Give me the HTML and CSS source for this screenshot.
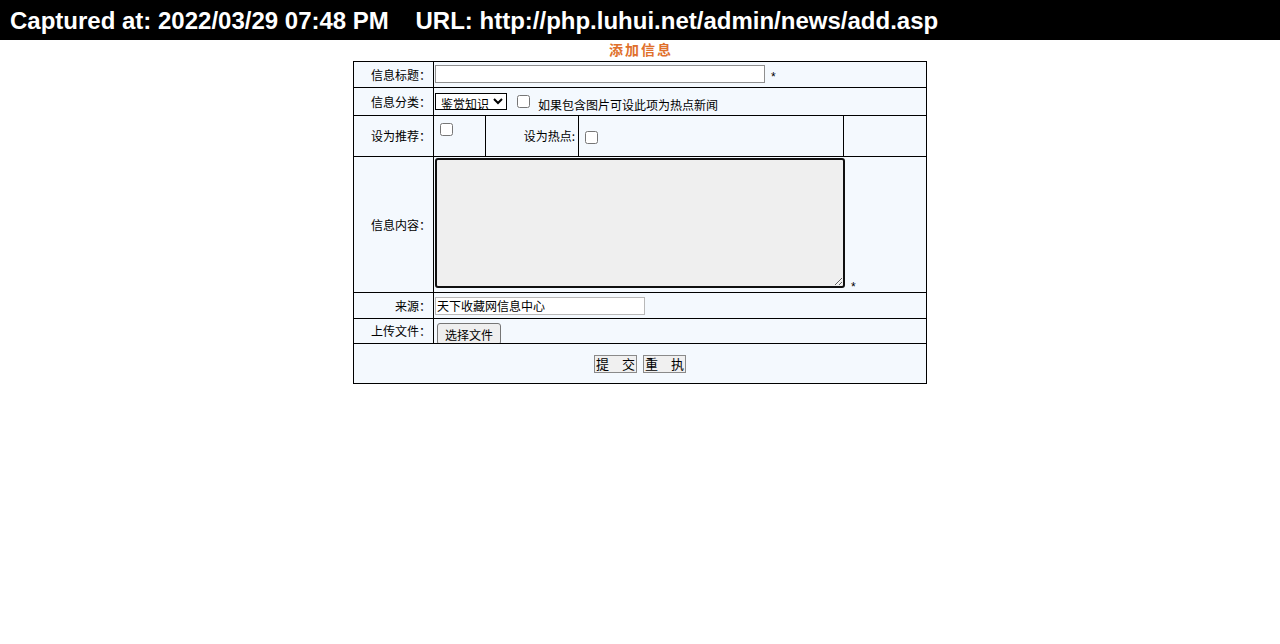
FILE: index.html
```html
<!DOCTYPE html>
<html lang="zh-CN">
<head>
<meta charset="utf-8">
<title>添加信息</title>
<link rel="stylesheet" href="styles.css">
</head>
<body>
<div class="capbar">Captured at: 2022/03/29 07:48 PM    URL: http://php.luhui.net/admin/news/add.asp</div>
<div class="title">添加信息</div>
<table class="form">
  <colgroup>
    <col class="c1"><col class="c2"><col class="c3"><col class="c4"><col class="c5">
  </colgroup>
  <tr class="r1">
    <td class="lbl">信息标题：</td>
    <td colspan="4" class="val"><input type="text" class="t-title"><span class="star">*</span></td>
  </tr>
  <tr class="r2">
    <td class="lbl">信息分类：</td>
    <td colspan="4" class="val"><select class="sel"><option>鉴赏知识</option></select><input type="checkbox" class="chk chk-hot"><span class="hint">如果包含图片可设此项为热点新闻</span></td>
  </tr>
  <tr class="r3">
    <td class="lbl">设为推荐：</td>
    <td class="val top"><input type="checkbox" class="chk chk-rec"></td>
    <td class="lbl2">设为热点:</td>
    <td class="val"><input type="checkbox" class="chk chk-hot2"></td>
    <td></td>
  </tr>
  <tr class="r4">
    <td class="lbl">信息内容：</td>
    <td colspan="4" class="val bottom"><textarea class="content"></textarea><span class="star star2">*</span></td>
  </tr>
  <tr class="r5">
    <td class="lbl">来源：</td>
    <td colspan="4" class="val"><input type="text" class="t-src" value="天下收藏网信息中心"></td>
  </tr>
  <tr class="r6">
    <td class="lbl">上传文件：</td>
    <td colspan="4" class="val clip"><div class="clipbox"><button class="filebtn">选择文件</button></div></td>
  </tr>
  <tr class="r7">
    <td colspan="5" class="center"><button class="btn">提　交</button><button class="btn">重　执</button></td>
  </tr>
</table>
</body>
</html>
```
FILE: styles.css
```css
html, body {
  margin: 0;
  padding: 0;
  background: #ffffff;
}
body {
  font-family: "Noto Sans CJK SC", "Liberation Sans", sans-serif;
  font-size: 12px;
  color: #000;
}
.capbar {
  height: 40px;
  line-height: 42px;
  background: #000;
  color: #fff;
  font-family: "Liberation Sans", Arial, sans-serif;
  font-weight: bold;
  font-size: 24px;
  padding-left: 10px;
  white-space: pre;
  overflow: hidden;
}
.title {
  height: 21px;
  line-height: 19px;
  text-align: center;
  color: #e0702c;
  font-weight: bold;
  font-size: 14px;
  letter-spacing: 2px;
  padding-left: 2px;
}
.form {
  width: 574px;
  margin: 0 auto;
  border-collapse: collapse;
  background: #f4f9fe;
  table-layout: fixed;
}
.form td {
  border: 1px solid #000;
  padding: 0;
  font-size: 12px;
  line-height: 14px;
}
.c1 { width: 80px; }
.c2 { width: 52px; }
.c3 { width: 93px; }
.c4 { width: 265px; }
.c5 { width: 83px; }
.r1 td { height: 25px; }
.r2 td { height: 27px; }
.r3 td { height: 40px; }
.r4 td { height: 135px; }
.r5 td { height: 25px; }
.r6 td { height: 24px; }
.r7 td { height: 39px; }
.lbl {
  text-align: right;
  padding-right: 2px !important;
  white-space: nowrap;
}
.lbl2 {
  text-align: right;
  padding-right: 3px !important;
  white-space: nowrap;
}
.val {
  padding-left: 1px !important;
  white-space: nowrap;
}
.top { vertical-align: top; }
.bottom { vertical-align: bottom; }
.center { text-align: center; }
.t-title {
  width: 326px;
  height: 14px;
  margin: 0;
  border: 1px solid #8f8f8f;
  padding: 1px 1px;
  vertical-align: middle;
  background: #fff;
}
.star {
  display: inline-block;
  margin-left: 6px;
  vertical-align: -4px;
  font-family: "Liberation Sans", sans-serif;
  font-size: 12px;
}
.star2 {
  margin-left: 6px;
  vertical-align: 0;
  position: relative;
  top: 2px;
}
.sel {
  width: 72px;
  height: 17px;
  margin: 0;
  padding: 0 0 0 1px;
  border: 1px solid #000;
  border-radius: 0;
  font-size: 12px;
  font-family: "Noto Sans CJK SC", sans-serif;
  line-height: 15px;
  vertical-align: -5px;
  background: #fff;
  text-decoration: underline;
}
.chk {
  width: 13px;
  height: 13px;
  margin: 0;
}
.chk-hot {
  margin-left: 10px;
  vertical-align: -2px;
  position: relative;
  top: 2px;
}
.hint {
  margin-left: 8px;
  vertical-align: -6px;
}
.chk-rec {
  margin: 7px 0 0 5px;
}
.chk-hot2 {
  margin-left: 5px;
  vertical-align: middle;
}
.content {
  display: inline-block;
  width: 406px;
  height: 126px;
  margin: 0 0 4px 0;
  padding: 0;
  border: 2px solid #101010;
  border-radius: 3px;
  background: #efefef;
  vertical-align: bottom;
  resize: both;
}
.t-src {
  width: 206px;
  height: 14px;
  margin: 0;
  border: 1px solid #b8b8b8;
  padding: 1px 1px;
  vertical-align: middle;
  background: #fff;
  font-size: 12px;
  font-family: "Noto Sans CJK SC", sans-serif;
  color: #000;
}
.clip {
  vertical-align: top;
}
.clipbox {
  height: 24px;
  overflow: hidden;
}
.filebtn {
  margin: 4px 0 0 2px;
  height: 22px;
  padding: 0 7px;
  border: 1px solid #767676;
  border-radius: 3px;
  background: #efefef;
  font-size: 12px;
  font-family: "Noto Sans CJK SC", sans-serif;
  line-height: 22px;
  color: #000;
}
.btn {
  height: 18px;
  margin: 0 3px;
  padding: 0 1px;
  border: 1px solid #8a8a8a;
  border-radius: 0;
  background: #f0f0f0;
  font-size: 13px;
  font-family: "Noto Sans CJK SC", sans-serif;
  line-height: 16px;
  color: #000;
  vertical-align: middle;
}
```
